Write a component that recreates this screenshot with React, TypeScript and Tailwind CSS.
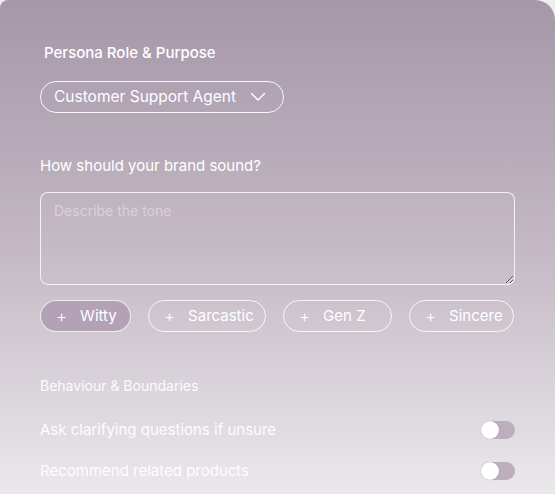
import React from "react";

function Chip({ label, active, w }: { label: string; active?: boolean; w: number }) {
  return (
    <button
      style={{ width: w }}
      className={
        "h-[32px] shrink-0 rounded-full border border-white/80 flex items-center pl-[15px] gap-[13px] text-[15px] text-white " +
        (active ? "bg-[#b3a2b6]" : "bg-transparent")
      }
    >
      <span className="text-[17px] leading-none font-light">+</span>
      <span>{label}</span>
    </button>
  );
}

function Toggle() {
  return (
    <div className="w-[34px] h-[18px] rounded-full bg-[#bcaebd] relative">
      <div className="absolute left-0 top-0 w-[18px] h-[18px] rounded-full bg-white shadow-[0_0_1px_rgba(0,0,0,0.25)]" />
    </div>
  );
}

export default function App() {
  return (
    <div className="w-[555px] h-[494px] bg-[#efedf0] overflow-hidden" style={{ fontFamily: "Inter, 'Noto Sans', sans-serif" }}>
      <div className="w-full h-full rounded-tl-[8px] rounded-tr-[20px] bg-gradient-to-b from-[#a597a8] via-[#c3b8c4] to-[#ebe8ec] px-[40px] pt-[43px] text-white">
        <div className="pl-[4px] text-[15px] font-medium leading-[20px]">Persona Role &amp; Purpose</div>
        <button className="mt-[18px] h-[32px] w-[244px] rounded-full border border-white/90 flex items-center pl-[13px] gap-[14px] text-[15.5px]">
          <span>Customer Support Agent</span>
          <svg width="16" height="10" viewBox="0 0 16 10" fill="none" stroke="white" strokeWidth="1.4" strokeLinecap="round" strokeLinejoin="round">
            <path d="M1.5 1.5 L8 8 L14.5 1.5" />
          </svg>
        </button>
        <div className="mt-[43px] text-[15px] leading-[20px]">How should your brand sound?</div>
        <textarea
          placeholder="Describe the tone"
          className="mt-[16px] block w-[475px] h-[93px] rounded-[8px] border border-white/80 bg-white/[0.03] px-[13px] py-[7px] text-[14px] placeholder:text-white/40 outline-none"
        />
        <div className="mt-[15px] flex gap-[17px]">
          <Chip label="Witty" active w={91} />
          <Chip label="Sarcastic" w={118} />
          <Chip label="Gen Z" w={109} />
          <Chip label="Sincere" w={105} />
        </div>
        <div className="mt-[44px] text-[14px] leading-[20px] text-white/90">Behaviour &amp; Boundaries</div>
        <div className="mt-[23px] flex items-center justify-between">
          <span className="text-[15px] text-white/95">Ask clarifying questions if unsure</span>
          <Toggle />
        </div>
        <div className="mt-[18px] flex items-center justify-between">
          <span className="text-[15px] text-white/95">Recommend related products</span>
          <Toggle />
        </div>
      </div>
    </div>
  );
}
